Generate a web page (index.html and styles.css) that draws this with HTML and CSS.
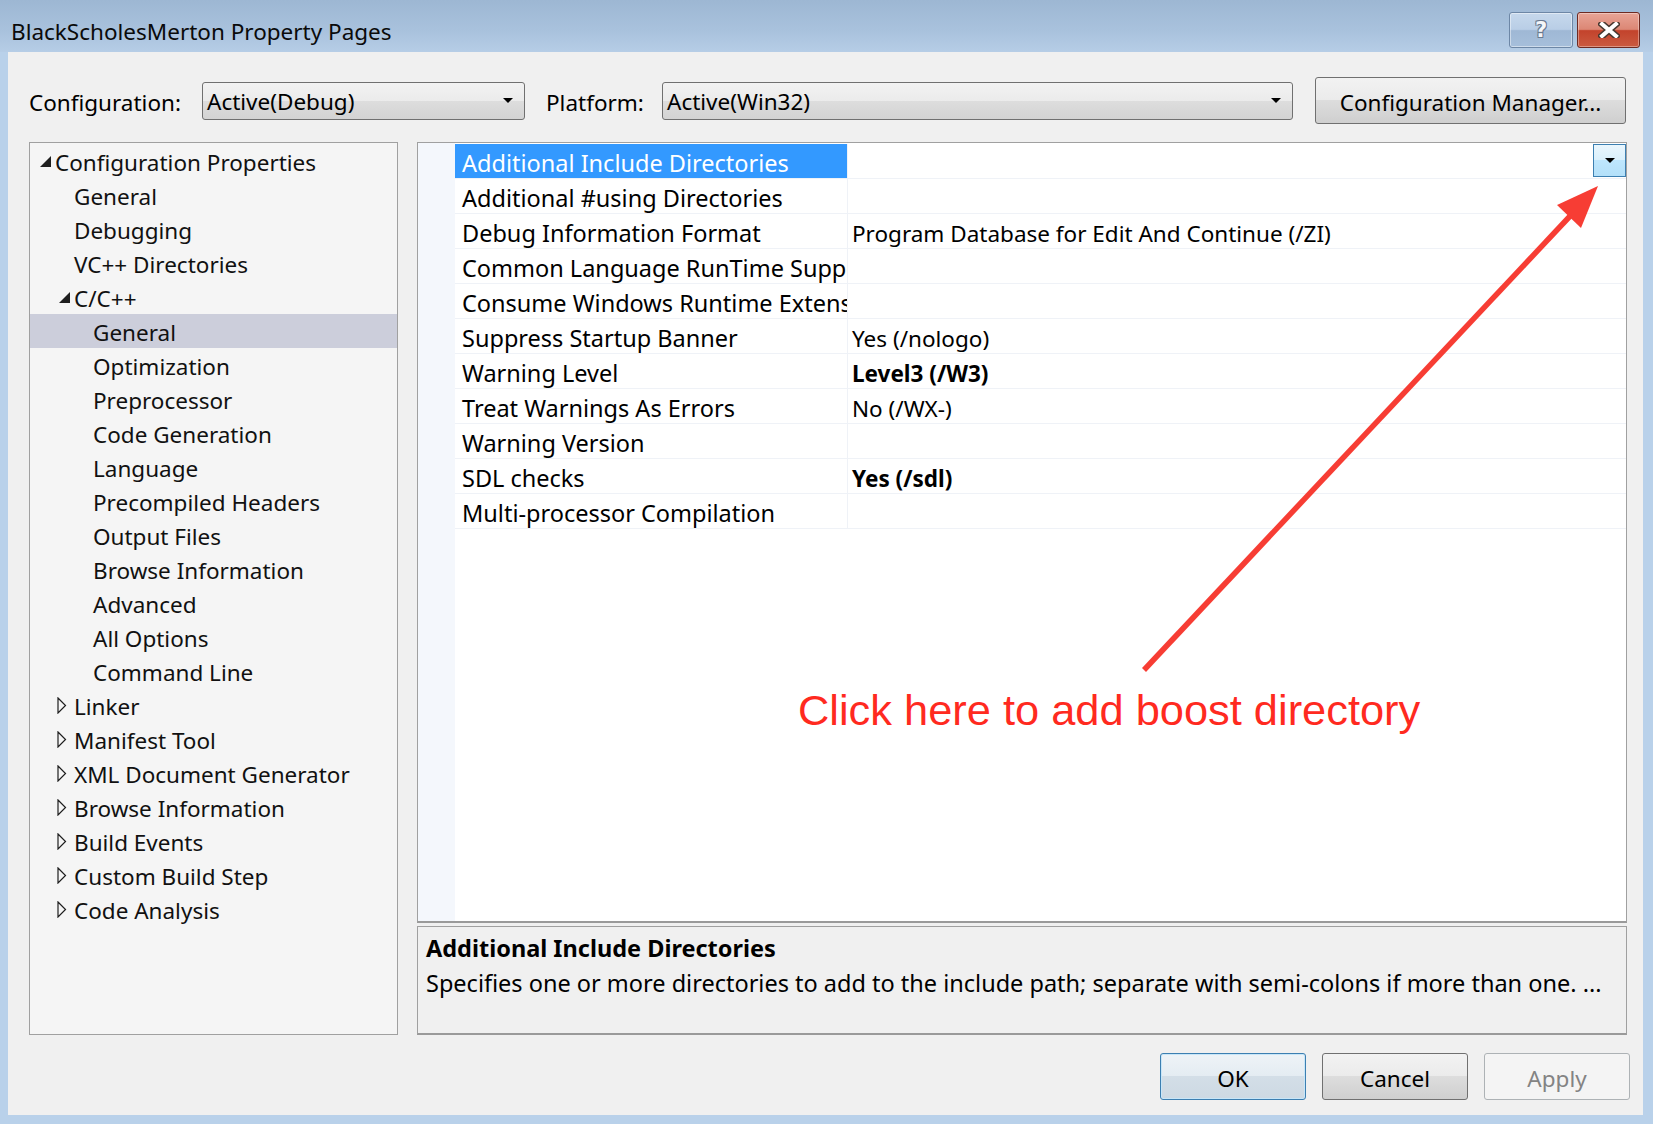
FILE: index.html
```html
<!DOCTYPE html>
<html>
<head>
<meta charset="utf-8">
<title>BlackScholesMerton Property Pages</title>
<link rel="stylesheet" href="styles.css">
</head>
<body>
<div class="titlebar">
  <span class="title">BlackScholesMerton Property Pages</span>
  <div class="caption-btns">
    <div class="cbtn help"><span>?</span></div>
    <div class="cbtn close">
      <svg width="22" height="16" viewBox="0 0 22 16">
        <path d="M4 2 L18 14 M18 2 L4 14" stroke="#47372f" stroke-width="7" stroke-linecap="square"/>
        <path d="M4 2 L18 14 M18 2 L4 14" stroke="#ffffff" stroke-width="4" stroke-linecap="square"/>
      </svg>
    </div>
  </div>
</div>
<div class="client">
  <div class="toolbar">
    <span class="lbl lbl-config">Configuration:</span>
    <div class="combo combo-config"><span>Active(Debug)</span><svg class="carrow" width="10" height="6" viewBox="0 0 10 6"><path d="M0 0 H10 L5 5 Z" fill="#000"/></svg></div>
    <span class="lbl lbl-platform">Platform:</span>
    <div class="combo combo-platform"><span>Active(Win32)</span><svg class="carrow" width="10" height="6" viewBox="0 0 10 6"><path d="M0 0 H10 L5 5 Z" fill="#000"/></svg></div>
    <div class="btn btn-cfgmgr">Configuration Manager...</div>
  </div>
  <div class="main">
    <div class="tree">
      <div class="trow l0"><span class="tw"><svg width="11" height="11" viewBox="0 0 11 11"><path d="M11 0 V11 H0 Z" fill="#1e1e1e"/></svg></span><span class="tt">Configuration Properties</span></div>
      <div class="trow l1"><span class="tw"></span><span class="tt">General</span></div>
      <div class="trow l1"><span class="tw"></span><span class="tt">Debugging</span></div>
      <div class="trow l1"><span class="tw"></span><span class="tt">VC++ Directories</span></div>
      <div class="trow l1"><span class="tw"><svg width="11" height="11" viewBox="0 0 11 11"><path d="M11 0 V11 H0 Z" fill="#1e1e1e"/></svg></span><span class="tt">C/C++</span></div>
      <div class="trow l2 sel"><span class="tw"></span><span class="tt">General</span></div>
      <div class="trow l2"><span class="tw"></span><span class="tt">Optimization</span></div>
      <div class="trow l2"><span class="tw"></span><span class="tt">Preprocessor</span></div>
      <div class="trow l2"><span class="tw"></span><span class="tt">Code Generation</span></div>
      <div class="trow l2"><span class="tw"></span><span class="tt">Language</span></div>
      <div class="trow l2"><span class="tw"></span><span class="tt">Precompiled Headers</span></div>
      <div class="trow l2"><span class="tw"></span><span class="tt">Output Files</span></div>
      <div class="trow l2"><span class="tw"></span><span class="tt">Browse Information</span></div>
      <div class="trow l2"><span class="tw"></span><span class="tt">Advanced</span></div>
      <div class="trow l2"><span class="tw"></span><span class="tt">All Options</span></div>
      <div class="trow l2"><span class="tw"></span><span class="tt">Command Line</span></div>
      <div class="trow l1"><span class="tw col"><svg width="10" height="17" viewBox="0 0 10 17"><path d="M1 1 L8.5 8.5 L1 16 Z" fill="none" stroke="#1e1e1e" stroke-width="1.2"/></svg></span><span class="tt">Linker</span></div>
      <div class="trow l1"><span class="tw col"><svg width="10" height="17" viewBox="0 0 10 17"><path d="M1 1 L8.5 8.5 L1 16 Z" fill="none" stroke="#1e1e1e" stroke-width="1.2"/></svg></span><span class="tt">Manifest Tool</span></div>
      <div class="trow l1"><span class="tw col"><svg width="10" height="17" viewBox="0 0 10 17"><path d="M1 1 L8.5 8.5 L1 16 Z" fill="none" stroke="#1e1e1e" stroke-width="1.2"/></svg></span><span class="tt">XML Document Generator</span></div>
      <div class="trow l1"><span class="tw col"><svg width="10" height="17" viewBox="0 0 10 17"><path d="M1 1 L8.5 8.5 L1 16 Z" fill="none" stroke="#1e1e1e" stroke-width="1.2"/></svg></span><span class="tt">Browse Information</span></div>
      <div class="trow l1"><span class="tw col"><svg width="10" height="17" viewBox="0 0 10 17"><path d="M1 1 L8.5 8.5 L1 16 Z" fill="none" stroke="#1e1e1e" stroke-width="1.2"/></svg></span><span class="tt">Build Events</span></div>
      <div class="trow l1"><span class="tw col"><svg width="10" height="17" viewBox="0 0 10 17"><path d="M1 1 L8.5 8.5 L1 16 Z" fill="none" stroke="#1e1e1e" stroke-width="1.2"/></svg></span><span class="tt">Custom Build Step</span></div>
      <div class="trow l1"><span class="tw col"><svg width="10" height="17" viewBox="0 0 10 17"><path d="M1 1 L8.5 8.5 L1 16 Z" fill="none" stroke="#1e1e1e" stroke-width="1.2"/></svg></span><span class="tt">Code Analysis</span></div>
    </div>
    <div class="right">
      <div class="grid">
        <div class="gutter"></div>
        <div class="rows">
          <div class="grow"><div class="name hl">Additional Include Directories</div><div class="val"><span></span><div class="ddbtn"><svg width="10" height="6" viewBox="0 0 10 6"><path d="M0 0 H10 L5 5 Z" fill="#000"/></svg></div></div></div>
          <div class="grow"><div class="name">Additional #using Directories</div><div class="val"></div></div>
          <div class="grow"><div class="name">Debug Information Format</div><div class="val">Program Database for Edit And Continue (/ZI)</div></div>
          <div class="grow"><div class="name">Common Language RunTime Support</div><div class="val"></div></div>
          <div class="grow"><div class="name">Consume Windows Runtime Extension</div><div class="val"></div></div>
          <div class="grow"><div class="name">Suppress Startup Banner</div><div class="val">Yes (/nologo)</div></div>
          <div class="grow"><div class="name">Warning Level</div><div class="val bold">Level3 (/W3)</div></div>
          <div class="grow"><div class="name">Treat Warnings As Errors</div><div class="val">No (/WX-)</div></div>
          <div class="grow"><div class="name">Warning Version</div><div class="val"></div></div>
          <div class="grow"><div class="name">SDL checks</div><div class="val bold">Yes (/sdl)</div></div>
          <div class="grow"><div class="name">Multi-processor Compilation</div><div class="val"></div></div>
        </div>
      </div>
      <div class="desc">
        <div class="desc-title">Additional Include Directories</div>
        <div class="desc-text">Specifies one or more directories to add to the include path; separate with semi-colons if more than one. ...</div>
      </div>
    </div>
  </div>
  <div class="buttons">
    <div class="btn btn-ok">OK</div>
    <div class="btn btn-cancel">Cancel</div>
    <div class="btn btn-apply">Apply</div>
  </div>
</div>
<svg class="annot-arrow" width="1653" height="1124" viewBox="0 0 1653 1124">
  <line x1="1144" y1="670" x2="1572" y2="214" stroke="#f73d34" stroke-width="5.5"/>
  <path d="M1598 186 L1557 205 L1581 228 Z" fill="#f73d34"/>
</svg>
<div class="annot-text">Click here to add boost directory</div>
</body>
</html>
```

FILE: styles.css
```css
* { box-sizing: border-box; }

body {
  margin: 0;
  width: 1653px;
  height: 1124px;
  background: #b9d1ea;
  font-family: "Noto Sans", "Open Sans", sans-serif;
  font-size: 23px;
  color: #000;
  position: relative;
  overflow: hidden;
}

.titlebar {
  height: 52px;
  display: flex;
  align-items: flex-start;
  background: linear-gradient(#9db7d3 0%, #a9c2dd 60%, #b6cde6 100%);
}

.title {
  padding: 17px 0 0 11px;
  font-size: 22.5px;
  line-height: 30px;
  color: #0a0a0a;
}

.caption-btns {
  margin: 12px 13px 0 auto;
  display: flex;
  gap: 4px;
}

.cbtn {
  height: 36px;
  border-radius: 3px;
  display: flex;
  align-items: center;
  justify-content: center;
}

.help {
  width: 64px;
  border: 1px solid #6d87a6;
  background: linear-gradient(#c6d8ec 0%, #b9cee6 48%, #9fb8d5 52%, #a6bfdb 100%);
  box-shadow: inset 0 0 0 1px rgba(255,255,255,0.45);
}

.help span {
  font-family: "DejaVu Sans", sans-serif;
  font-weight: bold;
  font-size: 21px;
  color: #f4f6f9;
  text-shadow: -1px -1px 0 #6a7a90, 1px -1px 0 #6a7a90, -1px 1px 0 #6a7a90, 1px 1px 0 #6a7a90;
}

.close {
  width: 63px;
  border: 1px solid #6e2a22;
  background: linear-gradient(#e8a496 0%, #dc8775 48%, #c3432c 52%, #cb5a40 100%);
  box-shadow: inset 0 0 0 1px rgba(255,255,255,0.35);
}

.client {
  margin-left: 8px;
  width: 1635px;
  height: 1063px;
  background: #f0f0f0;
  display: flex;
  flex-direction: column;
}

.toolbar {
  height: 90px;
  padding: 25px 0 0 21px;
  display: flex;
  align-items: flex-start;
  font-size: 22.5px;
}

.lbl {
  margin-top: 5px;
  padding-top: 2px;
  line-height: 38px;
  white-space: nowrap;
}

.lbl-config { width: 173px; }
.lbl-platform { width: 116px; margin-left: 21px; }

.combo {
  margin-top: 5px;
  height: 38px;
  border: 1px solid #707070;
  border-radius: 3px;
  background: linear-gradient(#f2f2f2 0%, #ebebeb 50%, #dddddd 50%, #d3d3d3 100%);
  display: flex;
  align-items: center;
  justify-content: space-between;
  padding: 2px 11px 0 4px;
  line-height: 34px;
}

.combo .carrow { margin-top: -2px; }

.combo-config { width: 323px; }
.combo-platform { width: 631px; }

.btn {
  height: 47px;
  border: 1px solid #707070;
  border-radius: 3px;
  background: linear-gradient(#f2f2f2 0%, #ebebeb 50%, #dddddd 50%, #cfcfcf 100%);
  display: flex;
  align-items: center;
  justify-content: center;
  padding-top: 3px;
  white-space: nowrap;
  font-size: 22.5px;
}

.btn-cfgmgr { width: 311px; margin-left: 22px; }

.main {
  height: 893px;
  padding-left: 21px;
  display: flex;
  gap: 19px;
}

.tree {
  width: 369px;
  height: 893px;
  border: 1px solid #a0a0a0;
  background: #f5f5f5;
  padding-top: 1px;
  font-size: 22.5px;
}

.trow {
  height: 34px;
  display: flex;
  align-items: center;
  white-space: nowrap;
  line-height: 34px;
  color: #111;
}

.tt { padding-top: 3px; line-height: 31px; }

.trow.l0 { padding-left: 7px; }
.trow.l1 { padding-left: 26px; }
.trow.l2 { padding-left: 45px; }
.trow.sel { background: #cccedb; }

.tw {
  width: 18px;
  height: 34px;
  flex: none;
  display: flex;
  align-items: center;
  padding-left: 3px;
}

.tw.col { padding-left: 1px; }

.right {
  width: 1210px;
  display: flex;
  flex-direction: column;
  gap: 3px;
}

.grid {
  height: 781px;
  border: 1px solid #a0a0a0;
  border-bottom: 2px solid #9a9a9a;
  background: #fff;
  display: flex;
}

.gutter {
  width: 37px;
  background: #f4f7fc;
}

.rows {
  flex: 1;
  padding-top: 1px;
}

.grow {
  height: 35px;
  display: flex;
  border-bottom: 1px solid #eff2f7;
}

.name {
  width: 393px;
  flex: none;
  padding: 5px 0 0 7px;
  font-size: 23.5px;
  line-height: 29px;
  white-space: nowrap;
  overflow-x: clip;
  border-right: 1px solid #eff2f7;
}

.name.hl {
  background: #3399ff;
  color: #fff;
}

.val {
  flex: 1;
  display: flex;
  justify-content: space-between;
  align-items: flex-start;
  padding: 5px 0 0 4px;
  font-size: 22.5px;
  line-height: 29px;
  white-space: nowrap;
}

.val.bold { font-weight: 700; }

.ddbtn {
  margin-top: -5px;
  width: 33px;
  height: 33px;
  border: 1px solid #3c7fb1;
  background: linear-gradient(#eaf6fd 0%, #d9f0fc 50%, #bee6fd 50%, #b3e0f9 100%);
  display: flex;
  align-items: center;
  justify-content: center;
}

.desc {
  height: 109px;
  border: 1px solid #a0a0a0;
  border-bottom: 2px solid #9a9a9a;
  background: #f0f0f0;
  padding: 4px 9px 0 8px;
  font-size: 23.5px;
  line-height: 35px;
  white-space: nowrap;
}

.desc-title { font-weight: 700; }

.buttons {
  margin-top: 18px;
  padding-right: 13px;
  display: flex;
  justify-content: flex-end;
  gap: 16px;
}

.buttons .btn { width: 146px; }

.btn-ok {
  border-color: #3c7fb1;
  background: linear-gradient(#eef3f7 0%, #e4ecf2 50%, #d3dee7 50%, #cdd9e3 100%);
  box-shadow: inset 0 0 0 1px #c8e6f8;
}

.btn-apply {
  border-color: #adb2b5;
  background: #f4f4f4;
  color: #838383;
}

.annot-arrow {
  position: absolute;
  left: 0;
  top: 0;
  pointer-events: none;
}

.annot-text {
  position: absolute;
  left: 798px;
  top: 689px;
  font-family: "Liberation Sans", Arial, sans-serif;
  font-size: 43.4px;
  line-height: 43px;
  color: #ff2a1f;
  white-space: nowrap;
}
```
